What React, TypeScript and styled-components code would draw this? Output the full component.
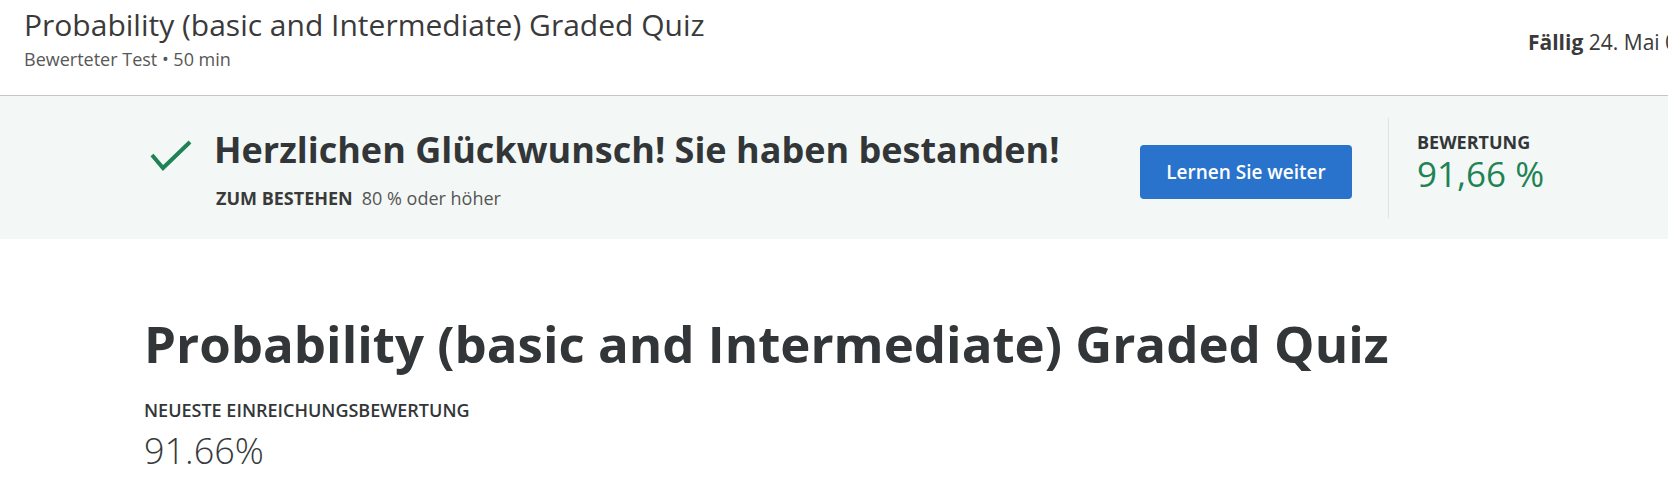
import React from "react";
import styled, { createGlobalStyle } from "styled-components";

const Global = createGlobalStyle`
  html, body { margin: 0; padding: 0; background: #ffffff; }
  body { font-family: "Open Sans", "Noto Sans", sans-serif; color: #373a3c; overflow: hidden; }
  * { box-sizing: border-box; }
`;

const Page = styled.div`
  width: 1668px;
  height: 491px;
  overflow: hidden;
  display: flex;
  flex-direction: column;
`;

const Header = styled.header`
  height: 96px;
  border-bottom: 1px solid #c6c6c6;
  display: flex;
  justify-content: space-between;
  align-items: flex-start;
  padding: 7px 0 0 24px;
`;

const HeaderTitles = styled.div`
  display: flex;
  flex-direction: column;
  gap: 5px;
`;

const HeaderTitle = styled.h1`
  margin: 0;
  font-size: 30px;
  line-height: 36px;
  font-weight: 400;
  color: #3a3a3a;
  white-space: nowrap;
`;

const HeaderMeta = styled.div`
  font-size: 18px;
  line-height: 22px;
  color: #575757;
  white-space: nowrap;
`;

const Due = styled.div`
  font-size: 21px;
  line-height: 30px;
  margin-top: 20px;
  white-space: nowrap;
  color: #3a3a3a;
  width: 140px;
  overflow: hidden;
  b { font-weight: 700; }
`;

const Banner = styled.section`
  height: 143px;
  background: #f3f8f6;
  display: flex;
  align-items: center;
  padding-left: 150px;
`;

const CheckBox = styled.div`
  flex: 0 0 64px;
  display: flex;
  align-items: flex-start;
  align-self: flex-start;
  margin-top: 44px;
`;

const Message = styled.div`
  flex: 0 0 926px;
  display: flex;
  flex-direction: column;
  gap: 14px;
  margin-top: 2px;
`;

const MessageTitle = styled.h2`
  margin: 0;
  font-size: 36px;
  line-height: 44px;
  font-weight: 700;
  color: #333638;
  white-space: nowrap;
`;

const PassLine = styled.div`
  font-size: 18px;
  line-height: 24px;
  color: #555;
  white-space: nowrap;
  padding-left: 2px;
  b {
    font-weight: 700;
    color: #3a3a3a;
    margin-right: 9px;
  }
`;

const PrimaryButton = styled.button`
  flex: 0 0 212px;
  height: 54px;
  margin-top: 8px;
  border: none;
  border-radius: 4px;
  background: #2a73cc;
  color: #ffffff;
  font-family: "Open Sans", "Noto Sans", sans-serif;
  font-size: 19px;
  font-weight: 600;
  cursor: pointer;
`;

const VDivider = styled.div`
  flex: 0 0 1px;
  height: 100px;
  background: #dfe3e2;
  margin-left: 36px;
`;

const ScoreBlock = styled.div`
  display: flex;
  flex-direction: column;
  padding-left: 28px;
  margin-top: -12px;
`;

const ScoreLabel = styled.div`
  font-size: 18px;
  line-height: 24px;
  font-weight: 700;
  color: #333638;
`;

const ScoreValue = styled.div`
  font-size: 35px;
  line-height: 40px;
  font-weight: 400;
  color: #1f8354;
`;

const Main = styled.main`
  padding: 74px 0 0 144px;
  display: flex;
  flex-direction: column;
`;

const QuizTitle = styled.h1`
  margin: 0;
  font-size: 51px;
  line-height: 60px;
  font-weight: 700;
  color: #333638;
  white-space: nowrap;
`;

const SubmissionLabel = styled.div`
  margin-top: 25px;
  font-size: 18px;
  line-height: 24px;
  font-weight: 600;
  color: #333638;
`;

const SubmissionScore = styled.div`
  margin-top: 7px;
  font-size: 36px;
  line-height: 44px;
  font-weight: 300;
  color: #373a3c;
`;

const CheckIcon = () => (
  <svg width="44" height="34" viewBox="0 0 44 34" fill="none">
    <polyline
      points="2,15 13,28 40,2"
      stroke="#1f8354"
      strokeWidth="4"
      strokeLinecap="butt"
      strokeLinejoin="miter"
    />
  </svg>
);

export default function App() {
  return (
    <Page>
      <Global />
      <Header>
        <HeaderTitles>
          <HeaderTitle>Probability (basic and Intermediate) Graded Quiz</HeaderTitle>
          <HeaderMeta>Bewerteter Test • 50 min</HeaderMeta>
        </HeaderTitles>
        <Due>
          <b>Fällig</b> 24. Mai 06:59 MESZ
        </Due>
      </Header>
      <Banner>
        <CheckBox>
          <CheckIcon />
        </CheckBox>
        <Message>
          <MessageTitle>Herzlichen Glückwunsch! Sie haben bestanden!</MessageTitle>
          <PassLine>
            <b>ZUM BESTEHEN</b>80 % oder höher
          </PassLine>
        </Message>
        <PrimaryButton>Lernen Sie weiter</PrimaryButton>
        <VDivider />
        <ScoreBlock>
          <ScoreLabel>BEWERTUNG</ScoreLabel>
          <ScoreValue>91,66 %</ScoreValue>
        </ScoreBlock>
      </Banner>
      <Main>
        <QuizTitle>Probability (basic and Intermediate) Graded Quiz</QuizTitle>
        <SubmissionLabel>NEUESTE EINREICHUNGSBEWERTUNG</SubmissionLabel>
        <SubmissionScore>91.66%</SubmissionScore>
      </Main>
    </Page>
  );
}
